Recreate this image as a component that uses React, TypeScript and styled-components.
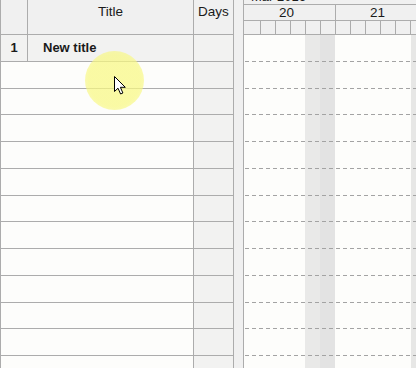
import styled, { createGlobalStyle } from 'styled-components'

const GlobalStyle = createGlobalStyle`
	html, body {
		margin: 0;
		padding: 0;
		background: #fdfdfb;
		font-family: 'Liberation Sans', Arial, sans-serif;
		color: #1a1a1a;
	}
`

const LINE = '#acacac'
const HEAD = '#f0f0f0'
const ROW_H = 26.75

const Page = styled.div`
	display: flex;
	width: 416px;
	height: 368px;
	overflow: hidden;
	position: relative;
`

/* left grid */
const Grid = styled.div`
	width: 234px;
	flex: none;
	border-left: 1px solid ${LINE};
	box-sizing: border-box;
	display: flex;
	flex-direction: column;
`
const GridRow = styled.div<{ $h: number }>`
	display: grid;
	grid-template-columns: 27px 166px 40px;
	height: ${(p) => p.$h}px;
	flex: none;
`
const Cell = styled.div<{ $shade?: boolean; $bold?: boolean; $align?: string; $pad?: number; $span?: number }>`
	box-sizing: border-box;
	grid-column: span ${(p) => p.$span || 1};
	border-right: 1px solid ${LINE};
	border-bottom: 1px solid ${LINE};
	background: ${(p) => (p.$shade ? '#f2f2f1' : 'transparent')};
	font-size: 13px;
	font-weight: ${(p) => (p.$bold ? 700 : 400)};
	display: flex;
	align-items: center;
	justify-content: ${(p) => p.$align || 'flex-start'};
	padding-left: ${(p) => p.$pad || 0}px;
	white-space: nowrap;
	overflow: hidden;
`
const HeadCell = styled(Cell)`
	align-items: flex-start;
	padding-top: 4px;
	font-size: 13.5px;
	background: ${HEAD};
`

const Splitter = styled.div`
	flex: none;
	box-sizing: border-box;
	background: #f0f0f0;
	border-left: 1px solid ${LINE};
	border-right: 1px solid ${LINE};
	margin-left: -1px;
	width: 11px;
`

/* gantt */
const Gantt = styled.div`
	flex: 1;
	overflow: hidden;
	display: flex;
	flex-direction: column;
`
const MonthBand = styled.div`
	height: 5px;
	box-sizing: border-box;
	border-bottom: 1px solid ${LINE};
	background: ${HEAD};
	overflow: hidden;
	flex: none;
	padding-left: 7px;
`
const MonthText = styled.div`
	font-size: 13px;
	line-height: 15px;
	margin-top: -11px;
	white-space: nowrap;
`
const Strip = styled.div`
	display: flex;
	flex: none;
	background: ${HEAD};
`
const Day = styled.div<{ $w: number; $h: number }>`
	width: ${(p) => p.$w}px;
	height: ${(p) => p.$h}px;
	flex: none;
	box-sizing: border-box;
	border-right: 1px solid ${LINE};
	border-bottom: 1px solid ${LINE};
	font-size: 13.5px;
	line-height: 15px;
	text-align: center;
	padding-right: 6px;
`
const Slot = styled.div<{ $w: number }>`
	width: ${(p) => p.$w}px;
	height: 14px;
	flex: none;
	box-sizing: border-box;
	border-right: 1px solid ${LINE};
	border-bottom: 1px solid ${LINE};
`
const Body = styled.div`
	flex: 1;
	display: flex;
	flex-direction: column;
	background: linear-gradient(
		to right,
		transparent 61px,
		#e9e9e8 61px 76px,
		#e3e3e3 76px 91px,
		transparent 91px 167px,
		#e7e7e6 167px
	);
`
const Lane = styled.div`
	height: ${ROW_H}px;
	flex: none;
	box-sizing: border-box;
	background: repeating-linear-gradient(to right, #a3a3a3 0 4px, transparent 4px 7px) 1px
		bottom / 100% 1px no-repeat;
`

/* pointer overlay */
const Highlight = styled.div`
	position: absolute;
	left: 85px;
	top: 51px;
	width: 59px;
	height: 59px;
	border-radius: 50%;
	background: radial-gradient(
		circle,
		rgba(248, 248, 130, 0.72) 62%,
		rgba(248, 248, 130, 0.45) 92%,
		rgba(248, 248, 130, 0) 100%
	);
	pointer-events: none;
`
const Pointer = styled.svg`
	position: absolute;
	left: 114px;
	top: 76px;
	pointer-events: none;
`

const rows = Array.from({ length: 13 }, (_, i) => i)
const day20 = [17, 15, 15, 15, 15, 15]
const day21 = [15, 15, 15, 15, 15, 15]

export default function App() {
	return (
		<Page>
			<GlobalStyle />
			<Grid>
				<GridRow $h={35}>
					<HeadCell />
					<HeadCell $align="center">Title</HeadCell>
					<HeadCell $align="center">Days</HeadCell>
				</GridRow>
				{rows.map((i) => (
					<GridRow key={i} $h={ROW_H}>
						{i === 0 ? (
							<>
								<Cell $shade $bold $align="center">
									1
								</Cell>
								<Cell $shade $bold $pad={15}>
									New title
								</Cell>
							</>
						) : (
							<Cell $span={2} />
						)}
						<Cell $shade />
					</GridRow>
				))}
			</Grid>
			<Splitter />
			<Gantt>
				<MonthBand>
					<MonthText>Mar 2016</MonthText>
				</MonthBand>
				<Strip>
					<Day $w={92} $h={16}>20</Day>
					<Day $w={90} $h={16}>21</Day>
				</Strip>
				<Strip>
					{day20.concat(day21).map((w, i) => (
						<Slot key={i} $w={w} />
					))}
				</Strip>
				<Body>
					{rows.map((i) => (
						<Lane key={i} />
					))}
				</Body>
			</Gantt>
			<Highlight />
			<Pointer width="13" height="19" viewBox="0 0 13 19">
				<path
					d="M0.5 0.5 L0.5 15.5 L4 12.2 L6.6 18 L8.9 17 L6.4 11.3 L11.3 11.3 Z"
					fill="#fff"
					stroke="#000"
					strokeWidth="1"
					strokeLinejoin="round"
				/>
			</Pointer>
		</Page>
	)
}
